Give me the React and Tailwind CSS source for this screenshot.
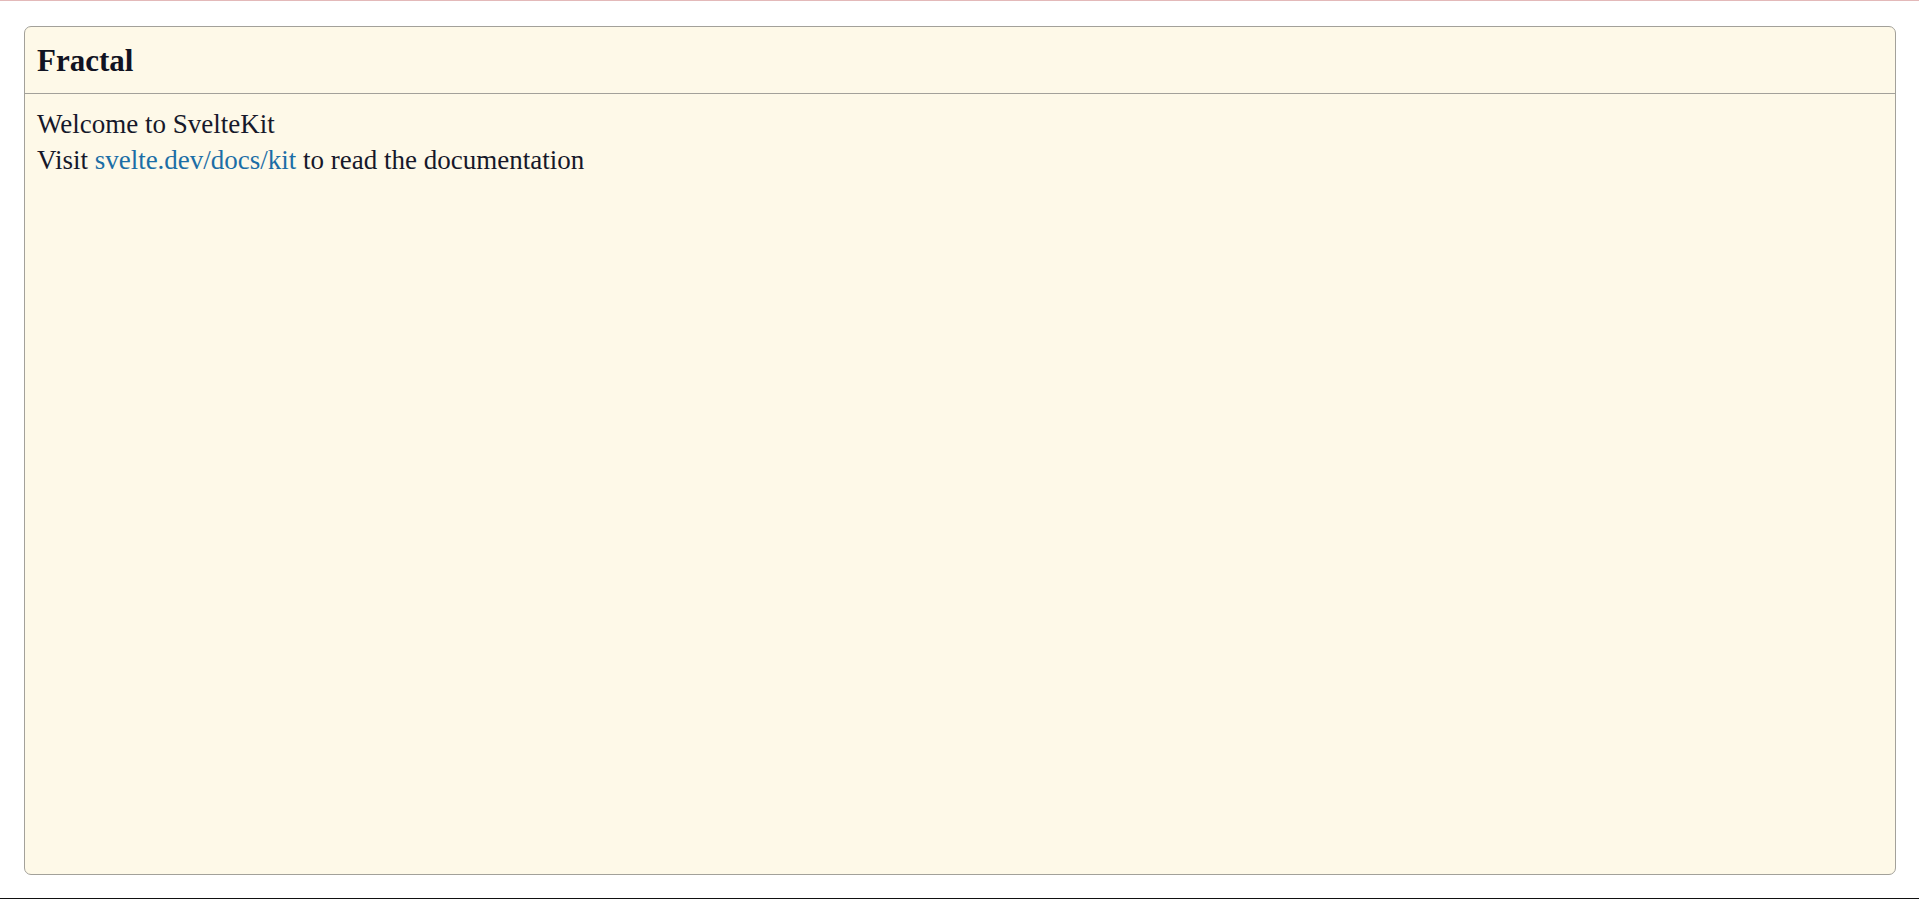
export default function App() {
  return (
    <div className="flex h-screen flex-col bg-white font-['Liberation_Serif',serif]">
      {/* top rule */}
      <div className="h-px bg-[#e3b9b9]" />

      <main className="flex flex-1 flex-col pl-6 pr-[23px] pt-[25px] pb-[23px]">
        <section className="flex flex-1 flex-col rounded-[7px] border border-[#a3a19a] bg-[#fef9e8]">
          <header className="border-b border-[#a3a19a] px-3 pt-[16px] pb-[14px]">
            <h1 className="text-[31px] font-bold leading-[36px] text-[#111322]">
              Fractal
            </h1>
          </header>
          <div className="px-3 pt-3 text-[27px] leading-[36px] text-[#16182a]">
            <p>Welcome to SvelteKit</p>
            <p>
              Visit{' '}
              <a href="#" className="text-[#1b6ea6]">
                svelte.dev/docs/kit
              </a>{' '}
              to read the documentation
            </p>
          </div>
        </section>
      </main>

      {/* bottom rule */}
      <div className="h-px bg-[#111111]" />
    </div>
  );
}
